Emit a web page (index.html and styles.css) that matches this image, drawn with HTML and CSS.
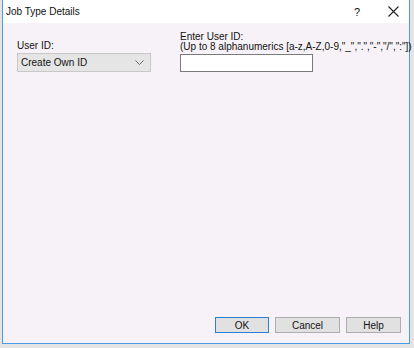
FILE: index.html
```html
<!DOCTYPE html>
<html lang="en">
<head>
  <meta charset="UTF-8">
  <title>Job Type Details</title>
  <link rel="stylesheet" href="styles.css">
</head>
<body>
  <div class="window">
    <div class="titlebar">
      <span class="title">Job Type Details</span>
      <span class="help-btn">?</span>
      <span class="close-btn">
        <svg width="11" height="11" viewBox="0 0 11 11"><path d="M0.5 0.5 L10.5 10.5 M10.5 0.5 L0.5 10.5" stroke="#222" stroke-width="1.1" fill="none"/></svg>
      </span>
    </div>

    <div class="content">
      <div class="fields">
        <div class="field field-left">
          <label>User ID:</label>
          <div class="select">
            <span>Create Own ID</span>
            <svg width="9" height="6" viewBox="0 0 9 6"><path d="M0.5 0.5 L4.5 4.5 L8.5 0.5" stroke="#666" stroke-width="1" fill="none"/></svg>
          </div>
        </div>
        <div class="field field-right">
          <label>Enter User ID:<br>(Up to 8 alphanumerics [a-z,A-Z,0-9,"_",".","-","/",":"])</label>
          <div class="textbox"></div>
        </div>
      </div>

      <div class="buttons">
        <button class="btn default">OK</button>
        <button class="btn">Cancel</button>
        <button class="btn">Help</button>
      </div>
    </div>
  </div>
</body>
</html>
```

FILE: styles.css
```css
body {
  margin: 0;
  background: #e4e4e4;
  font-family: 'Liberation Sans', Arial, sans-serif;
  font-size: 10px;
  color: #111;
}
.window {
  margin-left: 2px;
  width: 406px;
  height: 343px;
  border: 1px solid #4a9de4;
  border-top: none;
  display: flex;
  flex-direction: column;
  background: #f7f2f7;
}
.titlebar {
  height: 23px;
  background: #fff;
  display: flex;
  align-items: center;
  padding-left: 3px;
}
.title {
  flex: 1;
  font-size: 10px;
}
.help-btn {
  font-size: 11px;
  margin-right: 28px;
}
.close-btn {
  display: flex;
  align-items: center;
  margin-right: 10px;
}
.content {
  flex: 1;
  display: flex;
  flex-direction: column;
  justify-content: space-between;
  padding: 9px 8px 10px 14px;
}
.fields {
  display: flex;
  align-items: flex-end;
}
.field label {
  display: block;
  line-height: 10px;
  margin-bottom: 2px;
  white-space: nowrap;
}
.field-left {
  width: 163px;
  flex-shrink: 0;
}
.select {
  height: 17px;
  border: 1px solid #c8c8c8;
  background: #e5e5e5;
  display: flex;
  align-items: center;
  justify-content: space-between;
  padding: 0 6px 0 3px;
  width: 123px;
}
.textbox {
  width: 131px;
  height: 16px;
  border: 1px solid #7a7a7a;
  background: #fff;
}
.buttons {
  display: flex;
  justify-content: flex-end;
  gap: 6px;
}
.btn {
  font-family: inherit;
  font-size: 10px;
  height: 16px;
  padding: 0;
  border: 1px solid #adadad;
  background: #e1e1e1;
  color: #111;
  line-height: 13px;
}
.btn.default {
  width: 54px;
  border-color: #2a7fd4;
}
.btn:nth-child(2) {
  width: 65px;
}
.btn:nth-child(3) {
  width: 55px;
}
```
